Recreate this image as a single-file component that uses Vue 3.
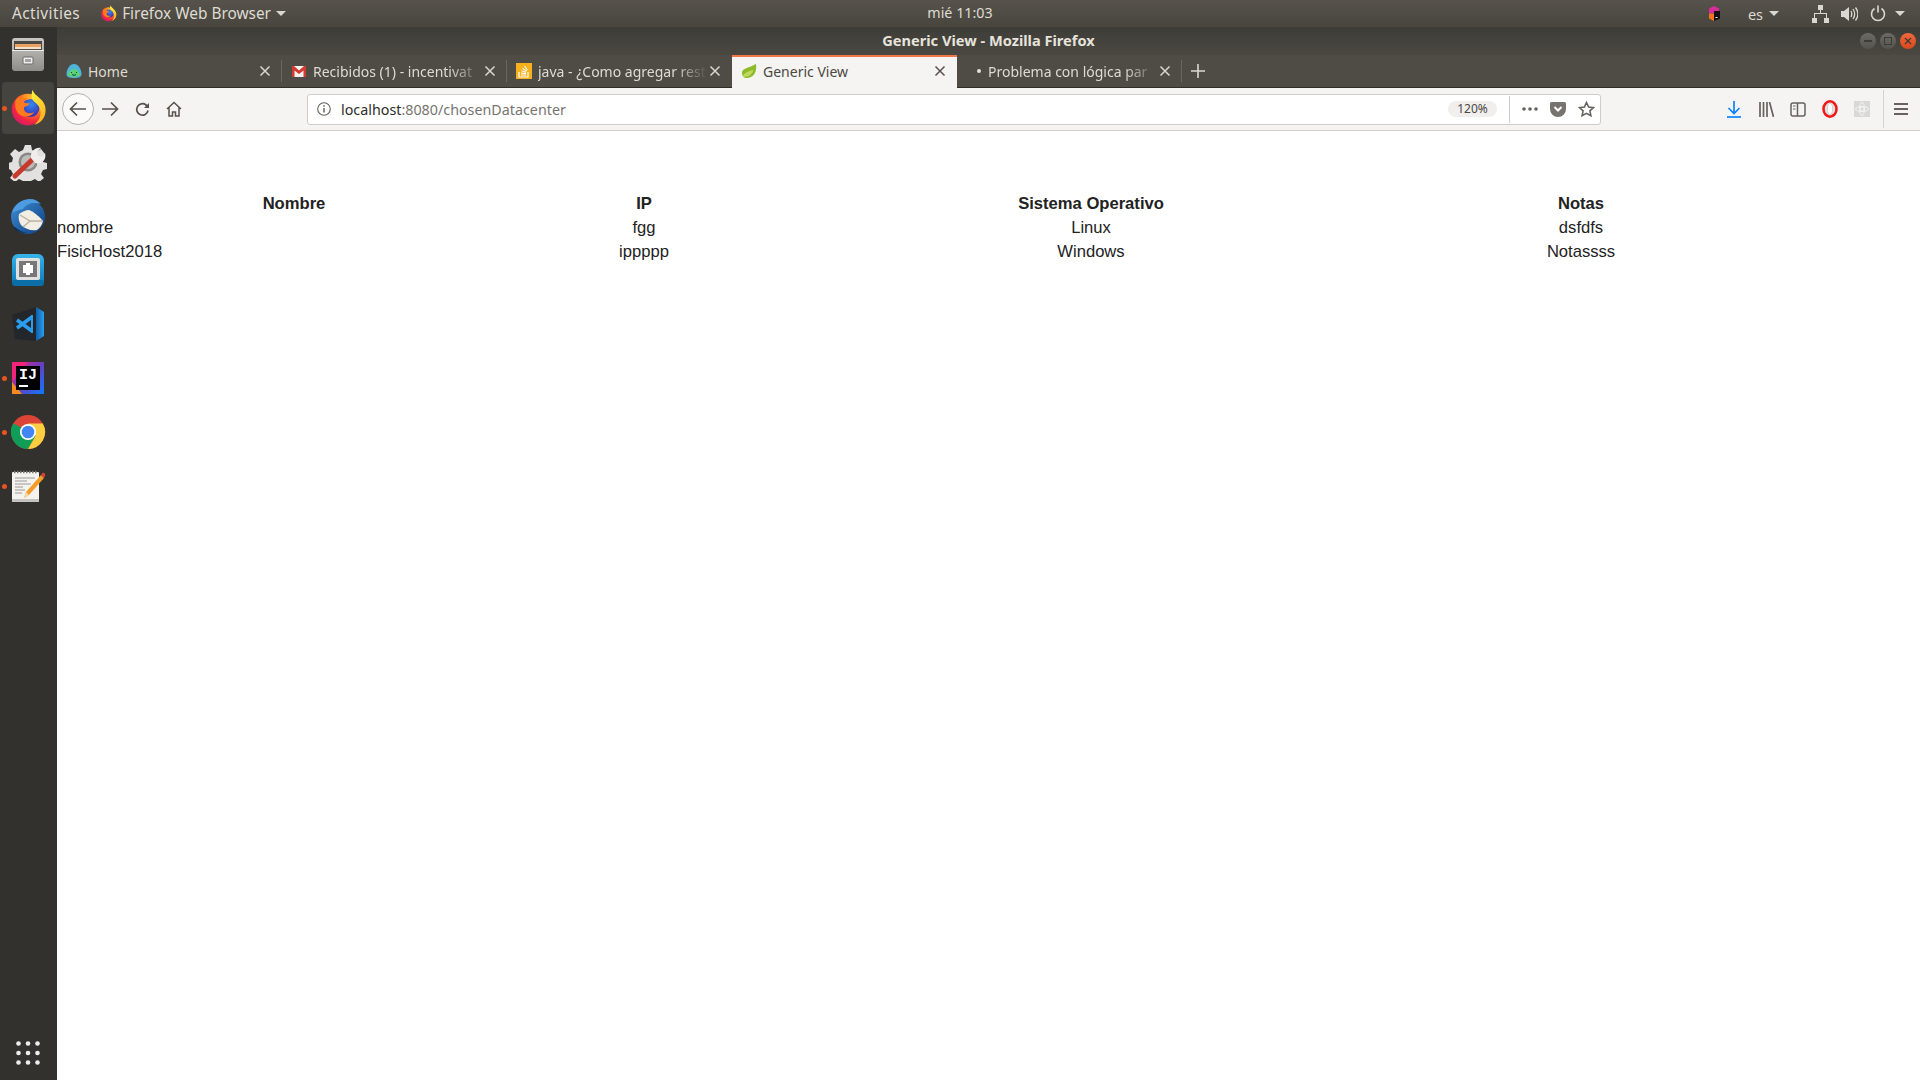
<template>
  <div class="desktop">
    <svg class="defs" width="0" height="0">
      <defs>
        <radialGradient id="ffBody" cx="0.72" cy="0.2" r="0.95">
          <stop offset="0" stop-color="#ffd93a" />
          <stop offset="0.38" stop-color="#ff8a1f" />
          <stop offset="0.72" stop-color="#f3263f" />
          <stop offset="1" stop-color="#c9167c" />
        </radialGradient>
        <radialGradient id="ffGlobe" cx="0.55" cy="0.3" r="0.8">
          <stop offset="0" stop-color="#2f8cf0" />
          <stop offset="0.6" stop-color="#3b46c4" />
          <stop offset="1" stop-color="#4a1f96" />
        </radialGradient>
        <linearGradient id="ffFlame" x1="0.3" y1="0" x2="0.7" y2="1">
          <stop offset="0" stop-color="#fff13f" />
          <stop offset="1" stop-color="#ffab1c" />
        </linearGradient>
        <linearGradient id="drawer" x1="0" y1="0" x2="0" y2="1">
          <stop offset="0" stop-color="#c9c7c3" />
          <stop offset="1" stop-color="#8f8d89" />
        </linearGradient>
        <linearGradient id="tbBlue" x1="0" y1="0" x2="1" y2="1">
          <stop offset="0" stop-color="#3f8fd6" />
          <stop offset="1" stop-color="#0e3f80" />
        </linearGradient>
        <linearGradient id="ijGrad" x1="0" y1="0" x2="1" y2="1">
          <stop offset="0" stop-color="#f0247a" />
          <stop offset="0.5" stop-color="#6a3cc0" />
          <stop offset="1" stop-color="#087cfa" />
        </linearGradient>
        <linearGradient id="vbBlue" x1="0" y1="0" x2="0" y2="1">
          <stop offset="0" stop-color="#35b4ea" />
          <stop offset="1" stop-color="#0c78b8" />
        </linearGradient>
        <linearGradient id="vsPanel" x1="0" y1="0" x2="1" y2="0">
          <stop offset="0" stop-color="#0f5fa8" />
          <stop offset="1" stop-color="#2a9df0" />
        </linearGradient>
        <symbol id="firefox" viewBox="0 0 48 48">
          <circle cx="23.5" cy="26" r="20" fill="url(#ffBody)" />
          <circle cx="27" cy="24" r="11.5" fill="url(#ffGlobe)" />
          <path d="M30 1c1 5 5 7 9 11 6 5 8 11 7 18-1 7-6 13-14 15 5-4 8-9 8-15 0-7-4-11-9-15-3-3-3-9-1-14z" fill="url(#ffFlame)" />
          <path d="M8 15c2-3 4-5 7-6-1 2-1 3-1 4 3-2 7-2 10-1-3 1-5 3-5 5 2 1 5 1 7 1-1 3-4 4-6 4-2 2-1 5 1 7 3 2 7 2 11 0-3 5-10 7-15 5-6-2-9-8-9-13 0-2 0-4 0-6z" fill="#ff7a1e" />
        </symbol>
      </defs>
    </svg>

    <header class="topbar">
      <div class="top-left">
        <span class="activities">Activities</span>
        <div class="app-menu">
          <svg class="top-ff" width="17" height="17"><use href="#firefox" /></svg>
          <span>Firefox Web Browser</span>
          <i class="caret"></i>
        </div>
      </div>
      <div class="clock">mié 11:03</div>
      <div class="top-right">
        <svg class="tray-jb" width="12" height="15" viewBox="0 0 12 15">
          <path d="M1 2.500 6 0l5 2.500v5H1z" fill="#d92b9c" />
          <path d="M1 7.500h5V15l-5-2.500z" fill="#f5731f" />
          <path d="M6 5h6v7.500L6 15z" fill="#111" />
          <path d="M7.500 11h2v1h-2z" fill="#fff" />
        </svg>
        <span class="lang">es</span>
        <i class="caret lang-caret"></i>
        <svg class="tray-net" width="17" height="18" viewBox="0 0 17 18" fill="#d9d7d2">
          <rect x="6" y="0" width="5" height="5" />
          <rect x="0" y="13" width="5" height="5" />
          <rect x="12" y="13" width="5" height="5" />
          <path d="M8 5h1v3h6v5h-1V9H3v4H2V8h6z" />
        </svg>
        <svg class="tray-sound" width="17" height="16" viewBox="0 0 17 16" fill="none" stroke="#d9d7d2">
          <path d="M0 5h3l5-4v14l-5-4H0z" fill="#d9d7d2" stroke="none" />
          <path d="M10 5c1 2 1 4 0 6M12 3c2 3 2 7 0 10M14.500 1.500c3 4 3 9 0 13" stroke-width="1.300" />
        </svg>
        <svg class="tray-power" width="16" height="17" viewBox="0 0 16 17" fill="none" stroke="#d9d7d2" stroke-width="1.600">
          <path d="M4.500 3.500a6.500 6.500 0 1 0 7 0M8 0.500v7" />
        </svg>
        <i class="caret"></i>
      </div>
    </header>

    <div class="workspace">
      <aside class="dock">
        <div v-for="app in dockApps" :key="app" class="dock-item" :class="{ active: app === 'firefox' }">
          <span v-if="runningApps.includes(app)" class="run-dot"></span>

          <svg v-if="app === 'files'" width="36" height="36" viewBox="0 0 36 36">
            <rect x="2" y="2" width="32" height="33" rx="3" fill="url(#drawer)" />
            <rect x="4" y="5" width="28" height="9" fill="#4b4a48" />
            <rect x="5" y="8" width="26" height="3" fill="#e9a25f" />
            <rect x="5" y="11" width="26" height="2" fill="#f3e2c9" />
            <rect x="2" y="14" width="32" height="1" fill="#eeeeec" />
            <rect x="13" y="21" width="10" height="7" rx="1" fill="#f0efed" stroke="#6d6b68" />
            <rect x="15" y="23" width="6" height="3" fill="#a5a39f" />
          </svg>

          <svg v-else-if="app === 'firefox'" width="38" height="38"><use href="#firefox" /></svg>

          <svg v-else-if="app === 'settings'" width="38" height="38" viewBox="0 0 38 38">
            <path d="M16 2h6l1 5 4 2 5-3 4 5-3 4 1 4 4 1v6l-4 1-2 4 3 4-5 4-4-3-4 2-1 4h-6l-1-4-4-2-4 3-5-4 3-4-2-4-3-1v-6l4-1 1-4-3-4 5-5 4 3 4-2z" fill="#e2e1df" />
            <circle cx="19" cy="19" r="9.500" fill="#8a8885" />
            <circle cx="19" cy="19" r="7" fill="#bdbbb8" />
            <path d="M6 33 25 15" stroke="#c6392d" stroke-width="5" stroke-linecap="round" />
            <path d="M22 15c-1-6 4-11 10-10l-4 4 1 4 4 1 3-4c2 7-4 12-10 10z" fill="#efeeec" />
          </svg>

          <svg v-else-if="app === 'thunderbird'" width="38" height="38" viewBox="0 0 38 38">
            <circle cx="19" cy="20" r="17" fill="url(#tbBlue)" />
            <path d="M3 16C6 7 13 2 21 2c5 0 8 2 11 5-7-2-14-1-18 5-4 1-8 2-11 4z" fill="#4d9be0" />
            <path d="M10 17c3-2 7-4 10-4 5 2 10 6 14 11-1 4-3 7-6 9-6 1-12-1-16-5-2-3-3-7-2-11z" fill="#f2eee4" />
            <path d="M11 18l10 6 13 0M21 24l-7 6" fill="none" stroke="#b9b2a2" stroke-width="1.300" />
            <path d="M6 30c3 3 7 5 12 6-6 0-11-2-14-6z" fill="#0b2f5e" />
          </svg>

          <svg v-else-if="app === 'vbox'" width="32" height="32" viewBox="0 0 32 32">
            <rect x="0" y="0" width="32" height="32" rx="6" fill="url(#vbBlue)" />
            <rect x="0" y="26" width="32" height="6" rx="3" fill="#0b6ea8" />
            <rect x="4" y="4" width="24" height="22" rx="2" fill="#e0e0e0" />
            <rect x="7" y="7" width="18" height="16" fill="#777" />
            <path d="M11 11h3V9h4v2h3v8h-3v2h-4v-2h-3z" fill="#fff" />
          </svg>

          <svg v-else-if="app === 'vscode'" width="34" height="36" viewBox="0 0 34 36">
            <path d="M1 9 25 1v34L4 33z" fill="#23262b" />
            <path d="M25 1l8 5v24l-8 5z" fill="url(#vsPanel)" />
            <path d="M6 22 21 11M6 14l15 11" stroke="#2a9df0" stroke-width="3.500" />
            <path d="M21 9v18" stroke="#2a9df0" stroke-width="2" />
          </svg>

          <svg v-else-if="app === 'idea'" width="32" height="32" viewBox="0 0 32 32">
            <rect width="32" height="32" fill="url(#ijGrad)" />
            <path d="M0 0h16L0 20z" fill="#f0247a" />
            <path d="M0 20 10 32H0z" fill="#f58a1f" />
            <rect x="4" y="4" width="24" height="24" fill="#000" />
            <rect x="7" y="23" width="9" height="2" fill="#fff" />
            <text x="7" y="17" class="ij-text">IJ</text>
          </svg>

          <svg v-else-if="app === 'chrome'" width="36" height="36" viewBox="0 0 38 38">
            <circle cx="19" cy="19" r="18" fill="#db4437" />
            <path d="M3.400 10A18 18 0 0 0 19 37l9-15z" fill="#0f9d58" />
            <path d="M19 37a18 18 0 0 0 15.600-27H19l8 13z" fill="#ffcd40" />
            <circle cx="19" cy="19" r="8.500" fill="#fff" />
            <circle cx="19" cy="19" r="6.700" fill="#4285f4" />
          </svg>

          <svg v-else-if="app === 'notes'" width="36" height="34" viewBox="0 0 36 34">
            <rect x="2" y="3" width="27" height="30" rx="1" fill="#f4f3ef" />
            <rect x="2" y="30" width="27" height="3" fill="#c4c3bf" />
            <path d="M4 3h23" stroke="#777" stroke-width="2.500" stroke-dasharray="1.500 1.500" />
            <path d="M5 9h20M5 12h12M5 15h16M5 18h8M5 21h10M5 24h7" stroke="#9a9a98" stroke-width="1" />
            <path d="M14 29l2-6L31 6l3 3-15 17z" fill="#f39c28" />
            <path d="M14 29l2-6 3 3z" fill="#f5d9a8" />
            <path d="M31 6l1.500-2c1.500-1 3.500 1 2.500 3l-1 2z" fill="#d6423a" />
          </svg>
        </div>
        <div class="dock-item apps-grid">
          <svg width="26" height="26" viewBox="0 0 26 26" fill="#eeeeec">
            <template v-for="row in 3" :key="row">
              <circle v-for="col in 3" :key="col" :cx="3.500 + (col - 1) * 9.500" :cy="3.500 + (row - 1) * 9.500" r="2.300" />
            </template>
          </svg>
        </div>
      </aside>

      <main class="browser">
        <div class="titlebar">
          <span class="window-title">Generic View - Mozilla Firefox</span>
          <div class="window-buttons">
            <span class="win-btn"><i class="win-min"></i></span>
            <span class="win-btn"><i class="win-max"></i></span>
            <span class="win-btn win-close">
              <svg width="8" height="8" viewBox="0 0 8 8" stroke="#3c3b37" stroke-width="1.300"><path d="M1 1l6 6M7 1 1 7" /></svg>
            </span>
          </div>
        </div>

        <div class="tabstrip">
          <div v-for="tab in tabs" :key="tab.title" class="tab" :class="{ selected: tab.selected }">
            <svg v-if="tab.icon === 'home'" width="16" height="16" viewBox="0 0 16 16">
              <path d="M0.500 11C0.500 6 4 1 8 1s7.500 5 7.500 10c0 3-3 4-7.500 4S0.500 14 0.500 11z" fill="#4fb5d8" />
              <path d="M2 11c1-2 3-5 6-5s5 3 6 5c0 2-3 3-6 3s-6-1-6-3z" fill="#5dd07a" />
              <path d="M5 9.500h1M10 9.500h1M6 11.500c1 1 3 1 4 0" stroke="#16452a" stroke-width="1" fill="none" />
            </svg>
            <svg v-else-if="tab.icon === 'gmail'" width="16" height="16" viewBox="0 0 16 16">
              <rect x="1" y="3" width="14" height="11" fill="#f4f2ef" />
              <path d="M1 3h2l5 4.500L13 3h2v11h-2.500V7.500L8 11 3.500 7.500V14H1z" fill="#d23b2e" />
            </svg>
            <svg v-else-if="tab.icon === 'so'" width="16" height="16" viewBox="0 0 16 16">
              <rect width="16" height="16" fill="#f7b11c" />
              <path d="M3 9v5h9V9" fill="none" stroke="#fff" stroke-width="1.200" />
              <path d="M5 12h5M5 10l5 .6M5.400 7.800l4.800 1.500M6.500 5.400l4.300 2.600M8.500 3l3 4" stroke="#fff" stroke-width="1.100" />
            </svg>
            <svg v-else-if="tab.icon === 'spring'" width="16" height="16" viewBox="0 0 16 16">
              <path d="M15 1c1 6-1 13-8 14-4 .5-6-2-6-5 0-5 7-5 14-9z" fill="#8dbb2c" />
              <path d="M1.500 13c3-4 7-5 11-6-2 5-6 8-11 6z" fill="#c3d95e" />
            </svg>
            <span v-else class="tab-dot"></span>
            <span class="tab-title" :class="{ faded: tab.faded }">{{ tab.title }}</span>
            <svg class="tab-close" width="12" height="12" viewBox="0 0 12 12" stroke-width="1.500"><path d="M1.500 1.500l9 9M10.500 1.500l-9 9" /></svg>
          </div>
          <svg class="new-tab" width="14" height="14" viewBox="0 0 14 14" stroke="#d9d7d2" stroke-width="1.600"><path d="M7 0v14M0 7h14" /></svg>
        </div>

        <div class="navbar">
          <span class="back-btn">
            <svg width="18" height="16" viewBox="0 0 18 16" fill="none" stroke="#55524e" stroke-width="1.700"><path d="M17 8H2M8 1.500 1.500 8 8 14.500" /></svg>
          </span>
          <svg class="nav-forward" width="18" height="16" viewBox="0 0 18 16" fill="none" stroke="#55524e" stroke-width="1.700"><path d="M1 8h15M10 1.500 16.500 8 10 14.500" /></svg>
          <svg class="nav-reload" width="15" height="15" viewBox="0 0 15 15" fill="none" stroke="#55524e" stroke-width="1.700">
            <path d="M13 8.500A5.700 5.700 0 1 1 11 3l2.500 2" />
            <path d="M14 1v5H9" fill="#55524e" stroke="none" />
          </svg>
          <svg class="nav-home" width="16" height="16" viewBox="0 0 16 16" fill="none" stroke="#55524e" stroke-width="1.500">
            <path d="M1 8 8 1.500 15 8M3 6.500V15h3.500v-4h3v4H13V6.500" />
          </svg>

          <div class="urlbar">
            <svg class="info" width="14" height="14" viewBox="0 0 14 14" fill="none" stroke="#66635f">
              <circle cx="7" cy="7" r="6.300" stroke-width="1.100" />
              <path d="M7 6v4.500" stroke-width="1.500" />
              <path d="M7 3.200v1.600" stroke-width="1.500" />
            </svg>
            <span class="url"><b>localhost</b>:8080/chosenDatacenter</span>
            <span class="zoom-pill">120%</span>
            <span class="url-sep"></span>
            <svg class="page-dots" width="16" height="4" viewBox="0 0 16 4" fill="#66635f">
              <circle cx="2" cy="2" r="1.800" /><circle cx="8" cy="2" r="1.800" /><circle cx="14" cy="2" r="1.800" />
            </svg>
            <svg class="pocket" width="16" height="15" viewBox="0 0 16 15">
              <path d="M1.500 0h13A1.500 1.500 0 0 1 16 1.500V7A8 8 0 0 1 0 7V1.500A1.500 1.500 0 0 1 1.500 0z" fill="#77746f" />
              <path d="M4.500 5 8 8.500 11.500 5" fill="none" stroke="#fff" stroke-width="2" />
            </svg>
            <svg class="star" width="17" height="16" viewBox="0 0 17 16" fill="none" stroke="#66635f" stroke-width="1.600">
              <path d="M8.500 1.500 10.600 6l4.900.6-3.600 3.300 1 4.800-4.400-2.400-4.400 2.400 1-4.800L1.500 6.600 6.400 6z" />
            </svg>
          </div>

          <div class="toolbar-right">
            <svg class="tb-download" width="14" height="17" viewBox="0 0 14 17" fill="none" stroke="#0a84ff" stroke-width="1.700">
              <path d="M7 0v12M1.500 7 7 12.500 12.500 7" /><path d="M0 16h14" />
            </svg>
            <svg class="tb-library" width="15" height="15" viewBox="0 0 15 15" fill="none" stroke="#66635f" stroke-width="1.700">
              <path d="M1 0v15M4.500 0v15M8 0v15M10.500 0l4 15" />
            </svg>
            <svg width="16" height="15" viewBox="0 0 16 15" fill="none" stroke="#66635f" stroke-width="1.500">
              <rect x="1" y="1" width="14" height="13" rx="2" />
              <path d="M7.500 1v13" /><path d="M3 4h2.500M3 7h2.500" stroke-width="1.200" />
            </svg>
            <svg width="16" height="18" viewBox="0 0 16 18">
              <ellipse cx="8" cy="9" rx="6.500" ry="7.700" fill="#e3e3e1" stroke="#f01a1a" stroke-width="2.600" />
              <ellipse cx="8" cy="9" rx="2.600" ry="5.800" fill="#fff" stroke="#c9c9c7" stroke-width="0.800" />
            </svg>
            <svg width="16" height="16" viewBox="0 0 16 16">
              <rect width="16" height="16" fill="#d8d8d6" />
              <circle cx="8" cy="8" r="2" fill="none" stroke="#f4f4f2" />
              <ellipse cx="8" cy="8" rx="6.500" ry="2.500" fill="none" stroke="#f4f4f2" />
              <ellipse cx="8" cy="8" rx="2.500" ry="6.500" fill="none" stroke="#f4f4f2" />
            </svg>
            <span class="tool-sep"></span>
            <svg class="tb-menu" width="14" height="14" viewBox="0 0 14 14" stroke="#66635f" stroke-width="2"><path d="M0 2h14M0 7h14M0 12h14" /></svg>
          </div>
        </div>

        <section class="page">
          <table class="hosts">
            <colgroup>
              <col class="col-name" /><col class="col-ip" /><col class="col-os" /><col class="col-notes" />
            </colgroup>
            <thead>
              <tr><th>Nombre</th><th>IP</th><th>Sistema Operativo</th><th>Notas</th></tr>
            </thead>
            <tbody>
              <tr v-for="host in hosts" :key="host.name">
                <td class="name-cell">{{ host.name }}</td>
                <td>{{ host.ip }}</td>
                <td>{{ host.os }}</td>
                <td>{{ host.notes }}</td>
              </tr>
            </tbody>
          </table>
        </section>
      </main>
    </div>
  </div>
</template>

<script setup>
const dockApps = ['files', 'firefox', 'settings', 'thunderbird', 'vbox', 'vscode', 'idea', 'chrome', 'notes']
const runningApps = ['firefox', 'idea', 'chrome', 'notes']

const tabs = [
  { title: 'Home', icon: 'home' },
  { title: 'Recibidos (1) - incentivat', icon: 'gmail', faded: true },
  { title: 'java - ¿Como agregar rest', icon: 'so', faded: true },
  { title: 'Generic View', icon: 'spring', selected: true },
  { title: 'Problema con lógica par', icon: 'dot', faded: true }
]

const hosts = [
  { name: 'nombre', ip: 'fgg', os: 'Linux', notes: 'dsfdfs' },
  { name: 'FisicHost2018', ip: 'ippppp', os: 'Windows', notes: 'Notassss' }
]
</script>

<style>
html, body {
  margin: 0;
  overflow: hidden;
  background: #fff;
}
</style>

<style scoped>
.desktop {
  width: 1920px;
  height: 1080px;
  display: flex;
  flex-direction: column;
  overflow: hidden;
  font-family: "Noto Sans", sans-serif;
}
.defs {
  display: block;
}

.topbar {
  height: 27px;
  flex: none;
  display: grid;
  grid-template-columns: 1fr auto 1fr;
  align-items: center;
  background: linear-gradient(#57534c, #47453e);
  color: #dfdbd2;
  font-size: 15.400px;
}
.top-left, .top-right, .app-menu {
  display: flex;
  align-items: center;
}
.activities {
  margin-left: 12px;
  letter-spacing: 0.4px;
}
.app-menu {
  margin-left: 20px;
  gap: 5px;
}
.clock {
  font-size: 14.300px;
  padding-bottom: 2px;
}
.caret {
  display: block;
  width: 0;
  height: 0;
  border-left: 5px solid transparent;
  border-right: 5px solid transparent;
  border-top: 5px solid #d9d7d2;
}
.top-right {
  justify-content: flex-end;
  padding-right: 15px;
}
.lang {
  margin-left: 28px;
  font-size: 14.500px;
}
.lang-caret {
  margin-left: 6px;
  margin-right: 33px;
}
.tray-sound {
  margin-left: 12px;
}
.tray-power {
  margin-left: 12px;
  margin-right: 9px;
}

.workspace {
  flex: 1;
  display: flex;
  min-height: 0;
}

.dock {
  width: 57px;
  flex: none;
  display: flex;
  flex-direction: column;
  background: #32312d;
}
.dock-item {
  position: relative;
  height: 54px;
  width: 57px;
  display: flex;
  align-items: center;
  justify-content: center;
  flex: none;
  box-sizing: border-box;
  padding-right: 1px;
}
.dock-item.active::before {
  content: "";
  position: absolute;
  left: 2px;
  top: 1px;
  width: 52px;
  height: 52px;
  border-radius: 4px;
  background: #45443f;
}
.dock-item svg {
  position: relative;
}
.run-dot {
  position: absolute;
  left: 2px;
  top: 25px;
  width: 5px;
  height: 5px;
  border-radius: 50%;
  background: #e95420;
  z-index: 1;
}
.apps-grid {
  margin-top: auto;
}
.ij-text {
  font-family: "Liberation Mono", monospace;
  font-weight: 700;
  font-size: 15px;
  fill: #fff;
}

.browser {
  flex: 1;
  min-width: 0;
  display: flex;
  flex-direction: column;
}
.titlebar {
  position: relative;
  height: 28px;
  flex: none;
  display: flex;
  align-items: center;
  justify-content: center;
  background: linear-gradient(#3d3c37, #4a4841);
  color: #e6e3dc;
  font-size: 14.600px;
  font-weight: 700;
}
.window-title {
  padding-bottom: 2px;
}
.window-buttons {
  position: absolute;
  right: 4px;
  top: 6px;
  display: flex;
  gap: 4px;
}
.win-btn {
  width: 16px;
  height: 16px;
  border-radius: 50%;
  display: flex;
  align-items: center;
  justify-content: center;
  background: linear-gradient(#6d6b65, #55534d);
}
.win-close {
  background: linear-gradient(#f0693a, #d8481c);
}
.win-min {
  width: 8px;
  height: 2px;
  background: #3c3b37;
}
.win-max {
  width: 6px;
  height: 6px;
  border: 1px solid #3c3b37;
}

.tabstrip {
  height: 32px;
  flex: none;
  display: flex;
  align-items: stretch;
  background: #4f4c45;
  border-bottom: 1px solid #2e2d29;
  color: #dfdbd2;
  font-size: 14px;
}
.tab {
  width: 225px;
  flex: none;
  box-sizing: border-box;
  display: flex;
  align-items: center;
  gap: 6px;
  padding: 0 11px 0 9px;
  position: relative;
}
.tab:not(.selected)::after {
  content: "";
  position: absolute;
  right: 0;
  top: 5px;
  bottom: 5px;
  width: 1px;
  background: #6a675f;
}
.tab:nth-child(3)::after {
  display: none;
}
.tab.selected {
  background: #f5f4f2;
  color: #4a4843;
  border-top: 2px solid #f07746;
  height: 33px;
  padding-bottom: 3px;
}
.tab-title {
  flex: 1;
  min-width: 0;
  white-space: nowrap;
  overflow: hidden;
  margin-right: -5px;
}
.tab-title.faded {
  -webkit-mask-image: linear-gradient(to right, #000 80%, transparent);
  mask-image: linear-gradient(to right, #000 80%, transparent);
}
.tab-close {
  flex: none;
  stroke: #d9d7d2;
}
.selected .tab-close {
  stroke: #55524e;
}
.tab-dot {
  width: 4px;
  height: 4px;
  border-radius: 50%;
  background: #e6e3dc;
  margin-left: 11px;
  margin-right: 1px;
}
.new-tab {
  align-self: center;
  margin-left: 9px;
}

.navbar {
  height: 43px;
  flex: none;
  box-sizing: border-box;
  display: flex;
  align-items: center;
  background: #f5f4f2;
  border-bottom: 1px solid #cfcdca;
  padding-left: 5px;
}
.back-btn {
  width: 32px;
  height: 32px;
  box-sizing: border-box;
  border: 1px solid #b4b2ae;
  border-radius: 50%;
  background: #fbfbfa;
  display: flex;
  align-items: center;
  justify-content: center;
  flex: none;
}
.nav-forward {
  margin-left: 7px;
}
.nav-reload {
  margin-left: 16px;
}
.nav-home {
  margin-left: 16px;
}
.urlbar {
  width: 1294px;
  height: 31px;
  flex: none;
  box-sizing: border-box;
  margin-left: 125px;
  display: flex;
  align-items: center;
  background: #fff;
  border: 1px solid #cfcdca;
  border-radius: 3px;
  padding: 0 5px 0 9px;
  font-size: 14.300px;
  color: #77746f;
}
.url {
  margin-left: 10px;
  flex: 1;
  white-space: nowrap;
}
.url b {
  font-weight: 400;
  color: #2e2d2a;
}
.zoom-pill {
  width: 49px;
  height: 16px;
  line-height: 16px;
  border-radius: 8px;
  background: #f0efed;
  color: #4a4843;
  text-align: center;
  font-size: 12px;
}
.url-sep {
  width: 1px;
  height: 27px;
  background: #cfcdca;
  margin-left: 12px;
}
.page-dots {
  margin-left: 12px;
}
.pocket {
  margin-left: 12px;
}
.star {
  margin-left: 12px;
}
.toolbar-right {
  display: flex;
  align-items: center;
  margin-left: 126px;
  gap: 16px;
}
.tb-library {
  margin-left: 2px;
}
.tool-sep {
  width: 1px;
  height: 38px;
  background: #d5d3d0;
  margin-left: -3px;
  margin-right: -3px;
}
.tb-menu {
  margin-left: -3px;
}

.page {
  flex: 1;
  background: #fff;
  padding-top: 61px;
}
.hosts {
  width: 1680px;
  table-layout: fixed;
  border-collapse: collapse;
  font-family: "Liberation Sans", Arial, sans-serif;
  font-size: 16.600px;
  color: #222;
}
.col-name { width: 474px; }
.col-ip { width: 226px; }
.col-os { width: 668px; }
.col-notes { width: 312px; }
.hosts th, .hosts td {
  padding: 0;
  height: 24px;
  line-height: 24px;
  text-align: center;
}
.hosts .name-cell {
  text-align: left;
}
</style>
